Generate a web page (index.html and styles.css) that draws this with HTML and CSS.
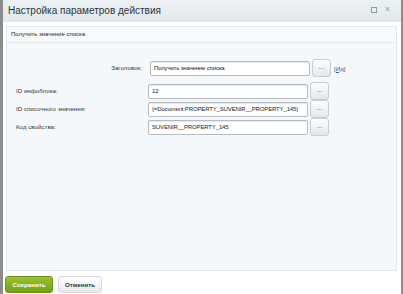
FILE: index.html
```html
<!DOCTYPE html>
<html>
<head>
  <meta charset="utf-8">
  <link rel="stylesheet" href="styles.css">
</head>
<body>
<div class="dialog">
  <div class="titlebar">
    <span class="title">Настройка параметров действия</span>
    <span class="tools">
      <span class="tool-max"></span>
      <span class="tool-close">×</span>
    </span>
  </div>
  <div class="content">
    <div class="panel">
      <div class="panel-head">Получить значение списка</div>
      <div class="form">
        <label class="lbl lbl-head">Заголовок:</label>
        <div class="field field-head">
          <input class="inp" type="text" value="Получить значение списка">
          <button class="dots" type="button">...</button>
          <a class="idlink" href="#">[<u>Ид</u>]</a>
        </div>

        <label class="lbl">ID инфоблока:</label>
        <div class="field">
          <input class="inp" type="text" value="12">
          <button class="dots" type="button">...</button>
        </div>

        <label class="lbl">ID списочного значения:</label>
        <div class="field">
          <input class="inp" type="text" value="{=Document:PROPERTY_SUVENIR__PROPERTY_145}">
          <button class="dots" type="button">...</button>
        </div>

        <label class="lbl">Код свойства:</label>
        <div class="field">
          <input class="inp" type="text" value="SUVENIR__PROPERTY_145">
          <button class="dots" type="button">...</button>
        </div>
      </div>
    </div>
  </div>
  <div class="footer">
    <button class="btn btn-save" type="button">Сохранить</button>
    <button class="btn btn-cancel" type="button">Отменить</button>
  </div>
</div>
</body>
</html>
```

FILE: styles.css
```css
html, body {
  margin: 0;
  padding: 0;
  background: #fff;
}
body {
  width: 403px;
  height: 294px;
  overflow: hidden;
  font-family: "Liberation Sans", Arial, sans-serif;
  color: #222;
}
.dialog {
  height: 294px;
  border-left: 3px solid #8c8c8c;
  border-right: 2px solid #8c8c8c;
  box-sizing: border-box;
  display: flex;
  flex-direction: column;
}

/* заголовок окна */
.titlebar {
  height: 22px;
  flex: none;
  display: flex;
  align-items: center;
  justify-content: space-between;
  padding: 0 11px 0 5px;
  background: linear-gradient(#edf1f3, #e1e8eb);
}
.title {
  font-size: 10px;
  color: #2a353b;
  margin-top: -2px;
}
.tools {
  display: flex;
  align-items: center;
  gap: 8px;
  margin-top: -3px;
}
.tool-max {
  width: 4px;
  height: 4px;
  border: 1px solid #8e9ca4;
}
.tool-close {
  font-size: 9px;
  color: #8e9ca4;
  line-height: 1;
}

/* панель с параметрами */
.content {
  flex: none;
  padding: 4px 4px 0 3px;
  background: #fff;
}
.panel {
  height: 243px;
  border: 1px solid #e1e7ea;
  background: #f4f8fa;
}
.panel-head {
  height: 15px;
  line-height: 14px;
  padding-left: 4px;
  font-size: 6px;
  color: #2b2b2b;
  background: #f7f9fa;
  border-bottom: 1px solid #e3e8eb;
}
.form {
  display: grid;
  grid-template-columns: 132px auto;
  grid-template-rows: 23px 18px 18px 18px;
  align-items: start;
  padding: 16px 0 0 9px;
}
.lbl {
  font-size: 6.2px;
  line-height: 18px;
  color: #3a3a3a;
}
.lbl-head {
  text-align: right;
  padding-right: 5px;
  position: relative;
  left: -1px;
}
.field {
  height: 18px;
  display: flex;
  align-items: center;
  gap: 2px;
}
.inp {
  box-sizing: border-box;
  width: 160px;
  height: 15px;
  margin: 0;
  padding: 0 3px;
  border: 1px solid #b5bcc1;
  border-radius: 2px;
  background: #fff;
  box-shadow: inset 0 1px 1px #e4e8ea;
  font-family: "Liberation Sans", Arial, sans-serif;
  font-size: 6px;
  line-height: 13px;
  letter-spacing: -0.15px;
  color: #1a1a1a;
}
.field-head .inp {
  margin-left: 2px;
}
.dots {
  box-sizing: border-box;
  width: 19px;
  height: 18px;
  margin: 0;
  padding: 0 0 3px;
  border: 1px solid #c7cdd0;
  border-radius: 3px;
  background: linear-gradient(#fdfefe, #e2e7e9);
  font-family: "Liberation Sans", Arial, sans-serif;
  font-size: 7px;
  color: #5b6770;
}
.idlink {
  font-size: 6.2px;
  color: #555;
  text-decoration: none;
  margin-left: 1px;
}
.idlink u {
  color: #2066b0;
}

/* кнопки */
.footer {
  flex: 1;
  display: flex;
  align-items: flex-end;
  gap: 5px;
  padding: 0 0 1px 2px;
}
.btn {
  box-sizing: border-box;
  height: 17px;
  margin: 0;
  padding: 0 5px;
  border-radius: 3px;
  font-family: "Liberation Sans", Arial, sans-serif;
  font-size: 6.2px;
  font-weight: bold;
}
.btn-save {
  width: 48px;
  border: 1px solid #6c9116;
  background: linear-gradient(#9ac12f, #72a11a);
  color: #fff;
}
.btn-cancel {
  width: 44px;
  border: 1px solid #d2d7da;
  background: linear-gradient(#ffffff, #e6eaec);
  color: #333;
}
```
